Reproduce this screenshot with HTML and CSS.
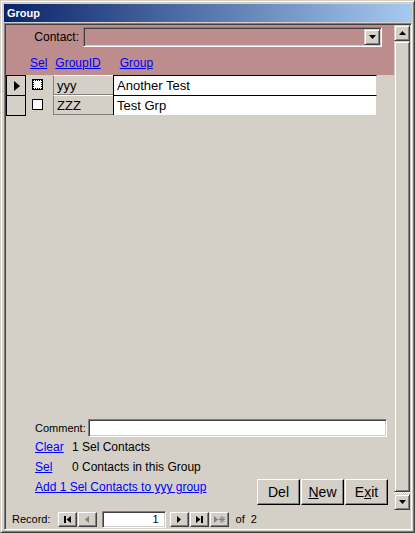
FILE: index.html
```html
<!DOCTYPE html>
<html>
<head>
<meta charset="utf-8">
<title>Group</title>
<link rel="stylesheet" href="styles.css">
</head>
<body>
<div class="window">
  <div class="titlebar">Group</div>
  <div class="client">
    <div class="main">
      <div class="form">
        <div class="header">
          <div class="contact-row">
            <span class="contact-lbl">Contact:</span>
            <div class="combo">
              <span class="combo-btn">
                <svg width="7" height="4" viewBox="0 0 7 4"><path d="M0 0h7L3.5 4z" fill="#000"/></svg>
              </span>
            </div>
          </div>
          <div class="col-links">
            <a class="lnk lnk-sel" href="#">Sel</a>
            <a class="lnk lnk-gid" href="#">GroupID</a>
            <a class="lnk lnk-grp" href="#">Group</a>
          </div>
        </div>

        <div class="detail">
          <div class="row">
            <div class="selector">
              <svg width="6" height="10" viewBox="0 0 6 10"><path d="M0 0L6 5L0 10z" fill="#000"/></svg>
            </div>
            <div class="chk-cell"><span class="chk focus"></span></div>
            <div class="cell gid">yyy</div>
            <div class="cell txt">Another Test</div>
          </div>
          <div class="row">
            <div class="selector"></div>
            <div class="chk-cell"><span class="chk"></span></div>
            <div class="cell gid">ZZZ</div>
            <div class="cell txt">Test Grp</div>
          </div>
        </div>

        <div class="spacer"></div>

        <div class="footer">
          <div class="comment-row">
            <span class="comment-lbl">Comment:</span>
            <div class="textbox comment-box"></div>
          </div>
          <div class="lower">
            <div class="info">
              <div class="info-row"><a class="lnk info-lnk" href="#">Clear</a><span>1 Sel Contacts</span></div>
              <div class="info-row"><a class="lnk info-lnk" href="#">Sel</a><span>0 Contacts in this Group</span></div>
              <div class="info-row"><a class="lnk" href="#">Add 1 Sel Contacts to yyy group</a></div>
            </div>
            <div class="buttons">
              <button class="btn">Del</button>
              <button class="btn"><u>N</u>ew</button>
              <button class="btn">E<u>x</u>it</button>
            </div>
          </div>
        </div>
      </div>

      <div class="vscroll">
        <span class="sb-btn">
          <svg width="7" height="4" viewBox="0 0 7 4"><path d="M3.5 0L7 4H0z" fill="#000"/></svg>
        </span>
        <span class="sb-thumb"></span>
        <span class="sb-track"></span>
        <span class="sb-btn">
          <svg width="7" height="4" viewBox="0 0 7 4"><path d="M0 0h7L3.5 4z" fill="#000"/></svg>
        </span>
      </div>
    </div>

    <div class="navbar">
      <span class="nav-lbl">Record:</span>
      <span class="nav-btn">
        <svg width="7" height="7" viewBox="0 0 7 7"><path d="M0 0h2v7H0zM7 0v7L2.5 3.5z" fill="#000"/></svg>
      </span>
      <span class="nav-btn off">
        <svg width="4" height="7" viewBox="0 0 4 7"><path d="M4 0v7L0 3.5z" fill="#808080"/></svg>
      </span>
      <span class="nav-field">1</span>
      <span class="nav-btn first-right">
        <svg width="4" height="7" viewBox="0 0 4 7"><path d="M0 0v7L4 3.5z" fill="#000"/></svg>
      </span>
      <span class="nav-btn">
        <svg width="7" height="7" viewBox="0 0 7 7"><path d="M0 0v7L4.5 3.5zM5 0h2v7H5z" fill="#000"/></svg>
      </span>
      <span class="nav-btn off">
        <svg width="11" height="7" viewBox="0 0 11 7"><path d="M0 0v7L4 3.5z" fill="#808080"/><path d="M8 0v7M4.5 3.5h7M5.5 1l5 5M10.5 1l-5 5" stroke="#808080" stroke-width="1"/></svg>
      </span>
      <span class="nav-of">of</span>
      <span class="nav-count">2</span>
    </div>
  </div>
</div>
</body>
</html>
```

FILE: styles.css
```css
* { box-sizing: border-box; }

html, body {
  margin: 0;
  padding: 0;
  background: #d4d0c8;
}

body {
  font-family: "Liberation Sans", Arial, sans-serif;
  font-size: 12px;
  color: #000;
}

/* outer window frame */
.window {
  width: 415px;
  height: 533px;
  background: #d4d0c8;
  border: 1px solid;
  border-color: #d4d0c8 #404040 #404040 #d4d0c8;
  box-shadow: inset 1px 1px #fff, inset -1px -1px #808080;
  padding: 3px 2px 2px 3px;
  display: flex;
  flex-direction: column;
}

.titlebar {
  height: 18px;
  flex: none;
  background: linear-gradient(to right, #0a246a, #a6caf0);
  color: #fff;
  font-weight: bold;
  font-size: 11px;
  line-height: 18px;
  padding-left: 3px;
}

/* sunken client area */
.client {
  flex: 1;
  margin-top: 1px;
  border: 1px solid;
  border-color: #808080 #fff #fff #808080;
  box-shadow: inset 1px 1px #404040, inset -1px -1px #d4d0c8;
  padding: 1px;
  display: flex;
  flex-direction: column;
  min-height: 0;
}

.main {
  flex: 1;
  display: flex;
  min-height: 0;
}

.form {
  flex: 1;
  display: flex;
  flex-direction: column;
}

/* form header */
.header {
  height: 50px;
  background: #bd8c8c;
  padding-top: 2px;
}

.contact-row {
  display: flex;
  align-items: center;
  height: 20px;
}

.contact-lbl {
  width: 73px;
  text-align: right;
  margin-right: 4px;
}

.combo {
  width: 299px;
  height: 20px;
  border: 1px solid;
  border-color: #808080 #fff #fff #808080;
  box-shadow: inset 1px 1px #404040, inset -1px -1px #d4d0c8;
  display: flex;
  justify-content: flex-end;
  padding: 1px 1px 1px 0;
}

.combo-btn {
  width: 16px;
  height: 16px;
  background: #d4d0c8;
  border: 1px solid;
  border-color: #d4d0c8 #404040 #404040 #d4d0c8;
  box-shadow: inset 1px 1px #fff, inset -1px -1px #808080;
  display: flex;
  align-items: center;
  justify-content: center;
}

.lnk {
  color: #0000ff;
  text-decoration: underline;
}

.col-links {
  display: flex;
  margin-top: 9px;
  line-height: 14px;
}

.lnk-sel { margin-left: 24px; }
.lnk-gid { margin-left: 8px; }
.lnk-grp { margin-left: 19px; }

/* detail rows */
.detail {
  display: flex;
  flex-direction: column;
}

.row {
  display: flex;
  height: 20px;
  align-items: flex-start;
}

.selector {
  width: 20px;
  height: 20px;
  border: 1px solid #000;
  border-bottom: none;
  display: flex;
  align-items: center;
  justify-content: center;
  padding-left: 2px;
}

.row:last-child .selector {
  height: 21px;
  border-bottom: 1px solid #000;
}

.chk-cell {
  width: 27px;
  height: 20px;
  padding: 4px 0 0 6px;
}

.chk {
  display: block;
  width: 11px;
  height: 11px;
  background: #fff;
  border: 1px solid #000;
  position: relative;
}

.chk.focus::after {
  content: "";
  position: absolute;
  inset: 0;
  border: 1px dotted #000;
}

.cell {
  height: 20px;
  font-size: 13px;
  line-height: 19px;
  padding-left: 3px;
  white-space: nowrap;
}

.gid {
  width: 60px;
  border-top: 1px solid #fff;
  border-left: 1px solid #808080;
  border-bottom: 1px solid #808080;
}

.txt {
  width: 264px;
  background: #fff;
  border-top: 1px solid #000;
  border-left: 1px solid #000;
  border-right: 1px solid #d4d0c8;
}

.spacer { flex: 1; }

/* footer */
.footer {
  display: flex;
  flex-direction: column;
  padding-left: 29px;
}

.comment-row {
  display: flex;
  align-items: center;
  height: 19px;
}

.comment-lbl {
  font-size: 11px;
  width: 49px;
}

.textbox {
  background: #fff;
  border: 1px solid;
  border-color: #808080 #fff #fff #808080;
  box-shadow: inset 1px 1px #404040, inset -1px -1px #d4d0c8;
}

.comment-box {
  margin-left: 4px;
  width: 299px;
  height: 18px;
}

.lower {
  display: flex;
  justify-content: space-between;
}

.info {
  display: flex;
  flex-direction: column;
}

.info-row {
  height: 20px;
  line-height: 20px;
  display: flex;
  white-space: nowrap;
}

.info-lnk { width: 37px; }

.buttons {
  display: flex;
  gap: 1px;
  margin-top: 42px;
  margin-right: 6px;
  margin-bottom: 5px;
}

.btn {
  width: 43px;
  height: 26px;
  padding: 0;
  background: #d4d0c8;
  font-family: "Liberation Sans", Arial, sans-serif;
  font-size: 14px;
  color: #000;
  border: 1px solid;
  border-color: #fff #000 #000 #fff;
  box-shadow: inset -1px -1px #808080, inset 1px 1px #d4d0c8;
}

/* vertical scrollbar */
.vscroll {
  width: 16px;
  display: flex;
  flex-direction: column;
}

.sb-btn,
.sb-thumb {
  background: #d4d0c8;
  border: 1px solid;
  border-color: #d4d0c8 #404040 #404040 #d4d0c8;
  box-shadow: inset 1px 1px #fff, inset -1px -1px #808080;
}

.sb-btn {
  height: 16px;
  flex: none;
  display: flex;
  align-items: center;
  justify-content: center;
}

.sb-thumb { flex: 1; }

.sb-track {
  height: 2px;
  flex: none;
  background: repeating-conic-gradient(#fff 0 25%, #d4d0c8 0 50%) 0 0 / 2px 2px;
}

/* record navigation bar */
.navbar {
  height: 18px;
  flex: none;
  display: flex;
  align-items: center;
  font-size: 11px;
  padding-left: 6px;
}

.nav-lbl { margin-right: 7px; }

.nav-btn {
  width: 19px;
  height: 15px;
  margin-right: 1px;
  background: #d4d0c8;
  border: 1px solid;
  border-color: #fff #404040 #404040 #fff;
  box-shadow: inset -1px -1px #808080;
  display: flex;
  align-items: center;
  justify-content: center;
}

.nav-field {
  width: 64px;
  height: 17px;
  margin: 0 4px 0 4px;
  background: #fff;
  border: 1px solid;
  border-color: #808080 #fff #fff #808080;
  box-shadow: inset 1px 1px #404040, inset -1px -1px #d4d0c8;
  text-align: right;
  padding-right: 6px;
  line-height: 15px;
}

.nav-of { margin-left: 6px; }
.nav-count { margin-left: 6px; }
```
